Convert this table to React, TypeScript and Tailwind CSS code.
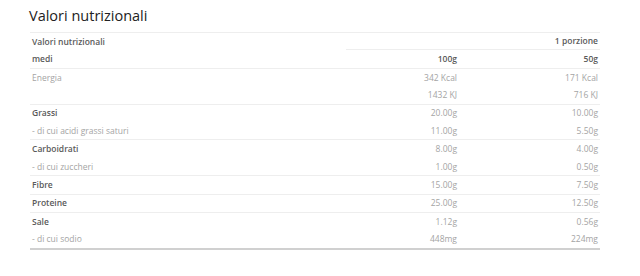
import React from 'react';

type Row = { label: string; per100: string; perServing: string; bold?: boolean };

// Each group is closed off by a light rule underneath
const groups: Row[][] = [
  [
    { label: 'Energia', per100: '342 Kcal', perServing: '171 Kcal' },
    { label: '', per100: '1432 KJ', perServing: '716 KJ' },
  ],
  [
    { label: 'Grassi', per100: '20.00g', perServing: '10.00g', bold: true },
    { label: '- di cui acidi grassi saturi', per100: '11.00g', perServing: '5.50g' },
  ],
  [
    { label: 'Carboidrati', per100: '8.00g', perServing: '4.00g', bold: true },
    { label: '- di cui zuccheri', per100: '1.00g', perServing: '0.50g' },
  ],
  [{ label: 'Fibre', per100: '15.00g', perServing: '7.50g', bold: true }],
  [{ label: 'Proteine', per100: '25.00g', perServing: '12.50g', bold: true }],
  [
    { label: 'Sale', per100: '1.12g', perServing: '0.56g', bold: true },
    { label: '- di cui sodio', per100: '448mg', perServing: '224mg' },
  ],
];

const cell = 'h-[17.4px] flex items-center px-[2px] pt-[1px]';

const NutritionRow: React.FC<{ row: Row }> = ({ row }) => (
  <div className="flex text-[#a4a4a4]">
    <div className={`${cell} w-[316px] ${row.bold ? 'font-semibold text-[#5a5a5a]' : ''}`}>{row.label}</div>
    <div className={`${cell} w-[113px] justify-end`}>{row.per100}</div>
    <div className={`${cell} flex-1 justify-end`}>{row.perServing}</div>
  </div>
);

export default function App() {
  return (
    <div className="w-[640px] h-[276px] bg-white" style={{ fontFamily: '"Open Sans", sans-serif' }}>
      <div className="h-[32px] pl-[29px] pt-[6px] text-[14.5px] leading-[20px] font-medium text-[#222]">Valori nutrizionali</div>

      <div className="ml-[30px] w-[570px] text-[8.5px] border-t border-[#eeeeee] border-b-2 border-b-[#d0d0d0]">
        <div className="flex font-semibold text-[#5a5a5a]">
          <div className={`${cell} w-[316px]`}>Valori nutrizionali</div>
          <div className={`${cell} flex-1 justify-end border-b border-[#eeeeee]`}>1 porzione</div>
        </div>
        <div className="flex font-semibold text-[#5a5a5a] border-b border-[#eeeeee]">
          <div className={`${cell} w-[316px]`}>medi</div>
          <div className={`${cell} w-[113px] justify-end`}>100g</div>
          <div className={`${cell} flex-1 justify-end`}>50g</div>
        </div>
        {groups.map((g, i) => (
          <div key={i} className={i < groups.length - 1 ? 'border-b border-[#eeeeee]' : ''}>
            {g.map((r, j) => (
              <NutritionRow key={j} row={r} />
            ))}
          </div>
        ))}
      </div>
    </div>
  );
}
